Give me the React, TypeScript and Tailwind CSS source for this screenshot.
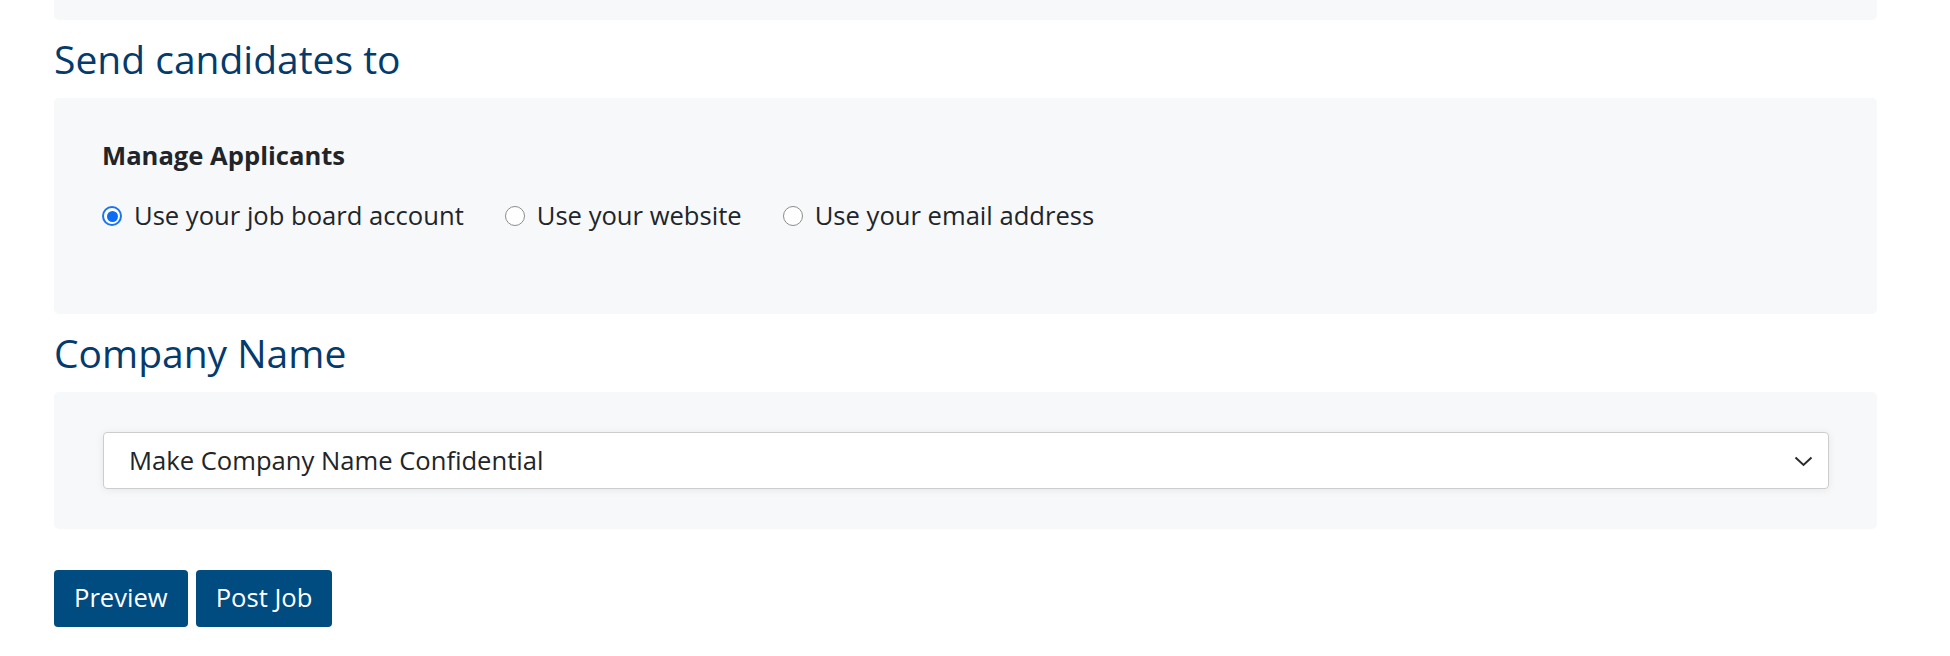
import React from 'react'

interface RadioOptionProps {
    label: string;
    checked?: boolean;
}

function RadioOption({ label, checked }: RadioOptionProps) {
    return (
        <label className="flex items-center gap-[12px]">
            {checked ? (
                <span className="flex h-[20px] w-[20px] items-center justify-center rounded-full border-2 border-[#1a73f0] bg-white">
                    <span className="h-[11px] w-[11px] rounded-full bg-[#0b6cf6]" />
                </span>
            ) : (
                <span className="h-[20px] w-[20px] rounded-full border border-[#8c8c8c] bg-white" />
            )}
            <span className="text-[25.6px] leading-[32px] text-[#212529]">{label}</span>
        </label>
    );
}

function SectionTitle({ children }: { children: React.ReactNode }) {
    return (
        <h2 className="pt-[15px] pb-[16px] text-[39px] leading-[47px] font-normal text-[#053b6c]">
            {children}
        </h2>
    );
}

export default function App() {
    return (
        <div className="min-h-[656px] w-[1950px] bg-white font-['Open_Sans',sans-serif]">
            <div className="ml-[54px] w-[1823px]">
                {/* bottom of the previous card */}
                <div className="h-[20px] rounded-b-[5px] bg-[#f7f8fa]" />

                <SectionTitle>Send candidates to</SectionTitle>
                <div className="h-[216px] rounded-[5px] bg-[#f7f8fa] px-[48px] pt-[42px]">
                    <div className="text-[25.6px] leading-[32px] font-bold text-[#212529]">Manage Applicants</div>
                    <div className="mt-[28px] flex items-center gap-[41px]">
                        <RadioOption label="Use your job board account" checked />
                        <RadioOption label="Use your website" />
                        <RadioOption label="Use your email address" />
                    </div>
                </div>

                <SectionTitle>Company Name</SectionTitle>
                <div className="rounded-[5px] bg-[#f7f8fa] py-[40px] pl-[49px] pr-[48px]">
                    <div className="flex h-[57px] items-center justify-between rounded-[4px] border border-[#cdcdcd] bg-white pl-[25px] pr-[15px] pt-[2px] shadow-[0_1px_8px_rgba(0,0,0,0.07)]">
                        <span className="text-[25.6px] text-[#212529]">Make Company Name Confidential</span>
                        <svg width="19" height="11" viewBox="0 0 19 11" fill="none">
                            <path d="M1.5 1.5 L9.5 9 L17.5 1.5" stroke="#2b2b2b" strokeWidth="2" />
                        </svg>
                    </div>
                </div>

                <div className="mt-[41px] flex gap-[8px]">
                    <button className="h-[57px] rounded-[4px] bg-[#004b80] px-[20px] text-[25.6px] text-white">Preview</button>
                    <button className="h-[57px] rounded-[4px] bg-[#004b80] px-[20px] text-[25.6px] text-white">Post Job</button>
                </div>
            </div>
        </div>
    );
}
